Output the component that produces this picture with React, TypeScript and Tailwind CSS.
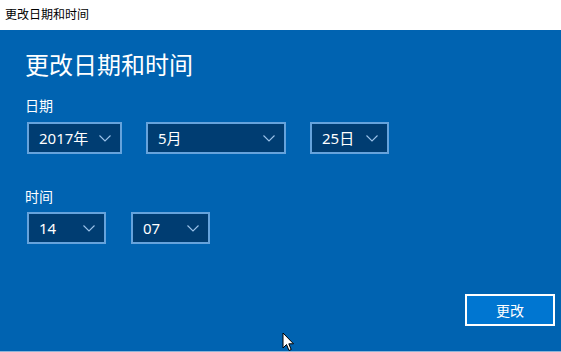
import { useState } from 'react';

const font = { fontFamily: '"Noto Sans", "Noto Sans CJK SC", sans-serif' };

interface SelectBoxProps {
  value: string;
  width: string;
}

function Chevron() {
  return (
    <svg width="12" height="7" viewBox="0 0 12 7" fill="none" aria-hidden>
      <path d="M0.5 0.5 L6 6 L11.5 0.5" stroke="#9cc3ea" strokeWidth="1.1" />
    </svg>
  );
}

function SelectBox({ value, width }: SelectBoxProps) {
  return (
    <div
      className={`flex h-[32px] ${width} items-center justify-between border-2 border-[#66a3dc] bg-[#003d72] pl-[10px] pr-[9px] text-[15px] text-white`}
    >
      <span className="leading-none">{value}</span>
      <Chevron />
    </div>
  );
}

export default function App() {
  const [year] = useState('2017年');

  return (
    <div className="relative h-[352px] w-[561px] overflow-hidden bg-white" style={font}>
      {/* window title bar */}
      <div className="flex h-[30px] items-center pl-[5px] text-[12px] text-black">更改日期和时间</div>

      <div className="flex h-[321px] flex-col bg-[#0063b1] pl-[25px] pr-[6px] text-white">
        <h1 className="mt-[19px] text-[24px] leading-[32px] font-normal">更改日期和时间</h1>

        <p className="mt-[15px] text-[14px] leading-[20px]">日期</p>
        <div className="mt-[6px] ml-[2px] flex gap-[24px]">
          <SelectBox value={year} width="w-[95px]" />
          <SelectBox value="5月" width="w-[140px]" />
          <SelectBox value="25日" width="w-[79px]" />
        </div>

        <p className="mt-[33px] text-[14px] leading-[20px]">时间</p>
        <div className="mt-[5px] ml-[2px] flex gap-[25px]">
          <SelectBox value="14" width="w-[79px]" />
          <SelectBox value="07" width="w-[79px]" />
        </div>

        <div className="mt-auto mb-[25px] flex justify-end">
          <button
            type="button"
            className="h-[32px] w-[90px] border-2 border-white bg-[#0076d1] text-[14px] text-white"
          >
            更改
          </button>
        </div>
      </div>
      <div className="h-[1px] bg-[#8fb5d8]" />

      {/* mouse pointer */}
      <svg
        className="absolute left-[282px] top-[332px]"
        width="13"
        height="20"
        viewBox="0 0 13 20"
        aria-hidden
      >
        <path
          d="M1 1 L1 16 L4.5 12.5 L7 18.5 L9.2 17.5 L6.8 11.8 L11.5 11.8 Z"
          fill="white"
          stroke="black"
          strokeWidth="1"
        />
      </svg>
    </div>
  );
}
